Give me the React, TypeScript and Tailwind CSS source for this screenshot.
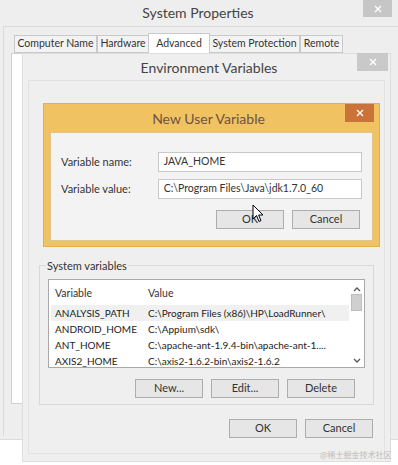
import React from "react";

const F = { fontFamily: 'Lato, "Noto Sans", sans-serif' };

function CloseBtn({ cls }: { cls: string }) {
  return (
    <div className={`absolute flex items-center justify-center ${cls}`}>
      <svg width="8" height="8" viewBox="0 0 8 8">
        <path d="M1 1 L7 7 M7 1 L1 7" stroke="#ffffff" strokeWidth="1.4" />
      </svg>
    </div>
  );
}

function Btn({ label, w = "w-[68px]" }: { label: string; w?: string }) {
  return (
    <div
      className={`${w} h-[19px] border border-[#adadad] bg-[#e6e6e6] flex items-center justify-center text-[11px] text-[#333]`}
    >
      {label}
    </div>
  );
}

function Tab({ label, active, w }: { label: string; active?: boolean; w: string }) {
  return (
    <div
      className={
        active
          ? `${w} h-[20px] border border-b-0 border-[#c9c9c9] bg-white flex justify-center items-start pt-[2px] text-[10.5px] text-[#333] whitespace-nowrap -mx-[1px] relative z-10`
          : `${w} h-[18px] mt-[2px] border border-[#c9c9c9] bg-[#f3f3f3] flex justify-center items-center text-[10.5px] text-[#333] whitespace-nowrap`
      }
    >
      {label}
    </div>
  );
}

const rows = [
  ["ANALYSIS_PATH", "C:\\Program Files (x86)\\HP\\LoadRunner\\"],
  ["ANDROID_HOME", "C:\\Appium\\sdk\\"],
  ["ANT_HOME", "C:\\apache-ant-1.9.4-bin\\apache-ant-1...."],
  ["AXIS2_HOME", "C:\\axis2-1.6.2-bin\\axis2-1.6.2"],
];

export default function App() {
  return (
    <div className="relative w-[398px] h-[465px] bg-white overflow-hidden text-[#333]" style={F}>
      {/* System Properties window */}
      <div className="absolute left-0 top-0 w-[398px] h-[440px] bg-[#efeeee] border-b border-[#dcdcdc]">
        <div className="h-[26px] flex items-center justify-center text-[14px] text-[#444] pr-[2px] pb-[1px]">
          System Properties
        </div>
        <CloseBtn cls="left-[363px] top-0 w-[29px] h-[17px] bg-[#c6c6c6]" />
        <div className="ml-[3px] h-[410px] border-l border-t border-[#dadada] pl-[10px] pt-[7px]">
          <div className="flex items-end h-[19px]">
            <Tab label="Computer Name" w="w-[83px]" />
            <Tab label="Hardware" w="w-[52px]" />
            <Tab label="Advanced" w="w-[62px]" active />
            <Tab label="System Protection" w="w-[91px]" />
            <Tab label="Remote" w="w-[43px]" />
          </div>
          <div className="w-[12px] h-[351px] bg-white border border-[#d0d0d0] -ml-[3px]" />
        </div>
      </div>

      {/* Environment Variables window */}
      <div className="absolute left-[22px] top-[53px] w-[369px] h-[409px] bg-[#f0efef] border border-[#dedede]">
        <div className="h-[26px] flex items-center justify-center text-[14px] text-[#444] pl-[5px]">
          Environment Variables
        </div>
        <CloseBtn cls="left-[334px] -top-[1px] w-[31px] h-[18px] bg-[#c9c9c9]" />
        <div className="mx-[5px] h-[374px] border border-[#e2e2e2] pt-[19px] px-[10px]">
          <div className="text-[11px] text-[#555] h-[14px] pl-[6px]">User variables for Administrator</div>
          <div className="h-[151px]" />
          <div className="relative border border-[#d8d8d8] h-[140px] pt-[13px] px-[8px]">
            <div className="absolute -top-[8px] left-[6px] px-[1px] bg-[#f0efef] text-[11px] text-[#333]">
              System variables
            </div>
            <div className="h-[89px] border border-[#a9a9a9] bg-white flex overflow-hidden">
              <div className="flex-1 pl-[6px] pt-[5px]">
                <div className="flex h-[17px] mb-[3px] items-center text-[10.5px] text-[#333]">
                  <div className="w-[93px]">Variable</div>
                  <div>Value</div>
                </div>
                {rows.map(([k, v], i) => (
                  <div
                    key={k}
                    className={`flex h-[16px] items-center text-[10px] text-[#222] -ml-[4px] pl-[4px] ${
                      i === 0 ? "bg-[#f0f0f0]" : ""
                    }`}
                  >
                    <div className="w-[93px] whitespace-nowrap">{k}</div>
                    <div className="whitespace-nowrap">{v}</div>
                  </div>
                ))}
              </div>
              <div className="w-[15px] flex flex-col items-center pt-[6px] pb-[3px]">
                <svg width="8" height="6" viewBox="0 0 8 6">
                  <path d="M1 5 L4 2 L7 5" stroke="#555" strokeWidth="1.3" fill="none" />
                </svg>
                <div className="w-[11px] h-[17px] mt-[2px] bg-[#cfcfcf] border border-[#bdbdbd]" />
                <div className="flex-1" />
                <svg width="8" height="6" viewBox="0 0 8 6">
                  <path d="M1 1 L4 4 L7 1" stroke="#555" strokeWidth="1.3" fill="none" />
                </svg>
              </div>
            </div>
            <div className="flex justify-end gap-[8px] mt-[11px] pr-[10px]">
              <Btn label="New..." />
              <Btn label="Edit..." />
              <Btn label="Delete" />
            </div>
          </div>
          <div className="flex justify-end gap-[8px] mt-[14px] pr-[1px]">
            <Btn label="OK" />
            <Btn label="Cancel" />
          </div>
        </div>
      </div>

      {/* New User Variable dialog */}
      <div className="absolute left-[43px] top-[103px] w-[337px] h-[144px] bg-[#f1c262] border border-[#e3b04f]">
        <div className="h-[28px] flex items-center justify-center text-[14px] text-[#6e5440] pr-[6px]">
          New User Variable
        </div>
        <CloseBtn cls="left-[301px] top-0 w-[29px] h-[18px] bg-[#c97339]" />
        <div className="mx-[6px] h-[109px] bg-[#f4f3f3] border border-[#e0c48a] pt-[19px] pl-[10px] pr-[10px]">
          <div className="flex items-center h-[20px]">
            <div className="w-[97px] text-[11px] text-[#333]">Variable name:</div>
            <div className="w-[205px] h-[20px] border border-[#c8c8c8] bg-white text-[10.5px] pl-[5px] flex items-center">
              JAVA_HOME
            </div>
          </div>
          <div className="flex items-center h-[20px] mt-[7px]">
            <div className="w-[97px] text-[11px] text-[#333]">Variable value:</div>
            <div className="w-[205px] h-[20px] border border-[#c8c8c8] bg-white text-[10.5px] pl-[5px] flex items-center">
              C:\Program Files\Java\jdk1.7.0_60
            </div>
          </div>
          <div className="flex justify-end gap-[8px] mt-[11px] pr-[2px]">
            <Btn label="OK" />
            <Btn label="Cancel" />
          </div>
        </div>
      </div>

      {/* Cursor */}
      <svg className="absolute left-[252px] top-[204px]" width="12" height="19" viewBox="0 0 12 19">
        <path
          d="M1 1 L1 15 L4.5 11.5 L7 17.5 L9 16.6 L6.6 11 L11 11 Z"
          fill="#ffffff"
          stroke="#000000"
          strokeWidth="1"
          strokeLinejoin="round"
        />
      </svg>

      {/* watermark */}
      <div
        className="absolute left-[320px] top-[450px] text-[8px] leading-[10px] text-[#bdbdbd] whitespace-nowrap"
        style={{ fontFamily: '"Noto Sans CJK SC", sans-serif' }}
      >
        @稀土掘金技术社区
      </div>
    </div>
  );
}
